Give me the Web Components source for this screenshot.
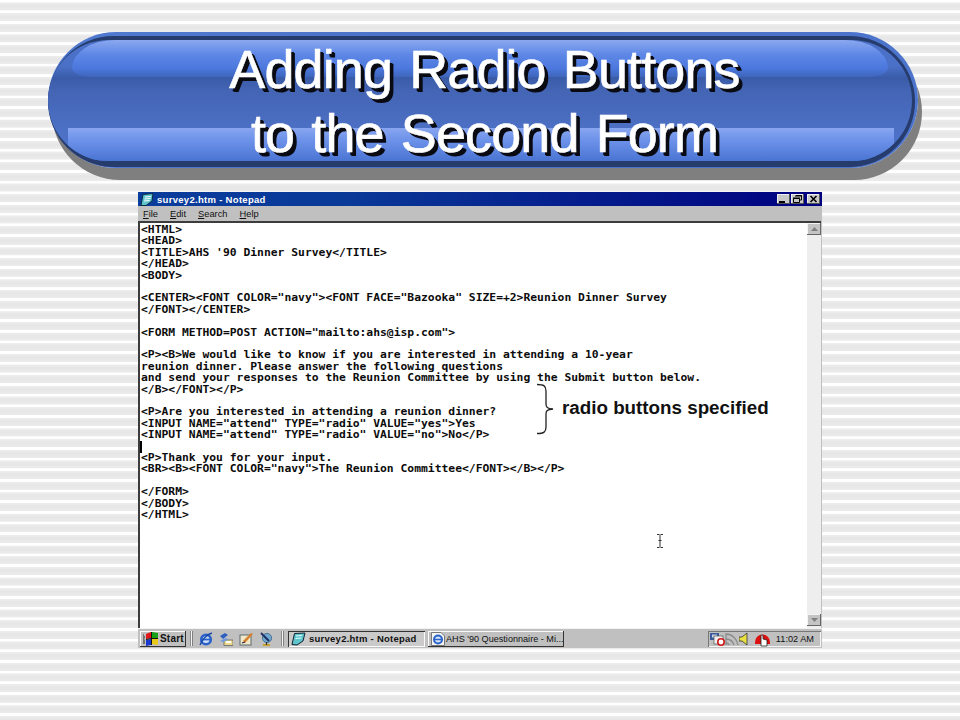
<!DOCTYPE html>
<html>
<head>
<meta charset="utf-8">
<title>Adding Radio Buttons</title>
<style>
html, body { margin: 0; height: 720px; overflow: hidden; }
body {
    background: repeating-linear-gradient(to bottom,
        #fff 0, #fff 2.2px, #ededed 2.7px, #e6e6e6 6px, #ebebeb 10.2px, #fff 10.65px);
    font-family: "Liberation Sans", Arial, sans-serif;
}
</style>
</head>
<body>
<slide-page>
    <slide-title>Adding Radio Buttons<br>to the Second Form</slide-title>
    <notepad-window title-text="survey2.htm - Notepad">
        <brace-note slot="overlay">radio buttons specified</brace-note>
    </notepad-window>
    <win-taskbar></win-taskbar>
</slide-page>

<script>
// Page wrapper, only the margins of the slide
class SlidePage extends HTMLElement {
    constructor() {
        super();
        this.attachShadow({ mode: 'open' }).innerHTML = `
            <style>
                :host { display: flex; flex-direction: column; height: 720px; box-sizing: border-box; padding-top: 32px; }
            </style>
            <slot></slot>`;
    }
}

// The glossy blue pill with the slide title
class SlideTitle extends HTMLElement {
    constructor() {
        super();
        this.attachShadow({ mode: 'open' }).innerHTML = `
            <style>
                :host {
                    display: block;
                    box-sizing: border-box;
                    width: 870px;
                    height: 136px;
                    margin: 0 0 24px 48px;
                    border-radius: 68px;
                    background: linear-gradient(to right, #5079d0, #4a72c8 50%, #4c74cc);
                    box-shadow: 4px 12px 0 #7f7f7f;
                    padding: 4px 3px 0 0;
                }
                .dark {
                    height: 131px;
                    box-sizing: border-box;
                    border-radius: 66px;
                    background: #263c6c;
                    padding: 4px 3px 6px 0;
                }
                .face {
                    position: relative;
                    height: 121px;
                    border-radius: 62px;
                    overflow: hidden;
                    background: linear-gradient(to bottom,
                        #4a70c8 0, #4a70c8 26px, #3a5ca8 38px, #4464b4 50px, #4c70c4 88px, #4c74d0 121px);
                }
                .hi-top {
                    position: absolute;
                    left: 24px; right: 24px; top: 0; height: 37px;
                    border-radius: 56px 56px 26px 26px / 36px 36px 12px 12px;
                    background: linear-gradient(to bottom, #8ba8f0 0, #5f88e6 14px, #4c78de 28px, #3f66bc 37px);
                }
                .hi-bottom {
                    position: absolute;
                    left: 20px; right: 18px; top: 88px; bottom: 0;
                    background: linear-gradient(to bottom, #89a6f0 0, #6d92ea 12px, #4c76d4 32px);
                }
                .text {
                    position: absolute;
                    inset: 0;
                    display: flex;
                    align-items: center;
                    justify-content: center;
                    text-align: center;
                    color: #fff;
                    font: 54px/64px "Liberation Sans", Arial, sans-serif;
                    letter-spacing: -0.9px;
                    word-spacing: 3px;
                    -webkit-text-stroke: 0.6px #fff;
                    text-shadow: 3px 3px 0 #0a0a12, 4px 4px 0 #0a0a12;
                    padding-left: 9px;
                }
            </style>
            <div class="dark"><div class="face">
                <div class="hi-top"></div>
                <div class="hi-bottom"></div>
                <div class="text"><div><slot></slot></div></div>
            </div></div>`;
    }
}

// Paragraphs of the edit area, a blank line between each
const NOTEPAD_BLOCKS = [
`<HTML>
<HEAD>
<TITLE>AHS '90 Dinner Survey</TITLE>
</HEAD>
<BODY>`,
`<CENTER><FONT COLOR="navy"><FONT FACE="Bazooka" SIZE=+2>Reunion Dinner Survey
</FONT></CENTER>`,
`<FORM METHOD=POST ACTION="mailto:ahs@isp.com">`,
`<P><B>We would like to know if you are interested in attending a 10-year
reunion dinner. Please answer the following questions
and send your responses to the Reunion Committee by using the Submit button below.
</B></FONT></P>`,
`<P>Are you interested in attending a reunion dinner?
<INPUT NAME="attend" TYPE="radio" VALUE="yes">Yes
<INPUT NAME="attend" TYPE="radio" VALUE="no">No</P>`,
`<P>Thank you for your input.
<BR><B><FONT COLOR="navy">The Reunion Committee</FONT></B></P>`,
`</FORM>
</BODY>
</HTML>`
];

const NOTEPAD_ICON = `<svg width="14" height="13" viewBox="0 0 14 13">
    <path d="M3 1.5 L13 .5 L12 8 L6 12.5 L1 12.5 Z" fill="#5fc4cc" stroke="#0a2a40" stroke-width="1"/>
    <path d="M5 4 L11 3.5 M4.5 6 L10.5 5.5 M4 8 L9.5 7.5" stroke="#fff" stroke-width="1"/>
</svg>`;

// Notepad window: title bar, menu bar, edit area and scrollbar
class NotepadWindow extends HTMLElement {
    constructor() {
        super();
        this.attachShadow({ mode: 'open' }).innerHTML = `
            <style>
                :host {
                    display: flex;
                    flex-direction: column;
                    position: relative;
                    box-sizing: border-box;
                    width: 684px;
                    height: 436px;
                    margin-left: 138px;
                    background: #c0c0c0;
                    font-family: "Liberation Sans", Arial, sans-serif;
                }
                .caption {
                    display: flex;
                    align-items: center;
                    gap: 3px;
                    height: 14px;
                    padding: 0 2px 0 2px;
                    background: linear-gradient(to right, #0a3c9c 0, #0a3a98 30%, #000080 100%);
                    color: #fff;
                    font-size: 9.5px;
                    font-weight: bold;
                    letter-spacing: 0.3px;
                }
                .caption .name { flex: 1; }
                .buttons { display: flex; align-items: center; }
                .buttons button {
                    all: unset;
                    display: flex;
                    width: 13px;
                    height: 10px;
                    background: #c8c8c8;
                    box-shadow: inset -1px -1px 0 #555, inset 1px 1px 0 #eee;
                }
                .buttons button + button { margin-left: 1px; }
                .buttons button:last-child { margin-left: 3px; }
                .menu {
                    display: flex;
                    align-items: center;
                    gap: 12px;
                    height: 15px;
                    padding-left: 5px;
                    font-size: 9.3px;
                    color: #111;
                }
                .menu u { text-decoration: underline; }
                .body {
                    flex: 1;
                    display: flex;
                    min-height: 0;
                    background: #fff;
                    border-left: 2px solid #3c3c3c;
                    border-top: 2px solid #3c3c3c;
                    margin-right: 1px;
                }
                .edit {
                    flex: 1;
                    min-width: 0;
                    padding: 1px 0 0 1px;
                    font: bold 11.35px/11.4px "DejaVu Sans Mono", "Liberation Mono", monospace;
                    color: #0c0c0c;
                    position: relative;
                }
                .block { white-space: pre; width: max-content; margin-bottom: 11.4px; }
                .caret {
                    position: absolute;
                    left: 0; top: 218px;
                    width: 2px; height: 12px;
                    background: #000;
                }
                .scroll {
                    width: 14px;
                    display: flex;
                    flex-direction: column;
                    justify-content: space-between;
                    background: #eeeeee;
                    padding-bottom: 2px;
                }
                .arrow {
                    height: 12px;
                    background: #c4c4c4;
                    box-shadow: inset -1px -1px 0 #666, inset 1px 1px 0 #f4f4f4;
                    display: flex;
                    align-items: center;
                    justify-content: center;
                }
            </style>
            <div class="caption">
                ${NOTEPAD_ICON}
                <span class="name"></span>
                <div class="buttons">
                    <button><svg width="13" height="10"><rect x="2" y="7" width="6" height="2" fill="#000"/></svg></button>
                    <button><svg width="13" height="10" fill="none" stroke="#000"><path d="M5 1.5h5.5v4.5h-2"/><path d="M2.5 4.5h6v4h-6z"/><path d="M4 2h7M2 4h7" stroke-width="1"/></svg></button>
                    <button><svg width="13" height="10" stroke="#000" stroke-width="1.6"><path d="M3.5 2l6 6M9.5 2l-6 6"/></svg></button>
                </div>
            </div>
            <div class="menu">
                <span><u>F</u>ile</span><span><u>E</u>dit</span><span><u>S</u>earch</span><span><u>H</u>elp</span>
            </div>
            <div class="body">
                <div class="edit"><span class="caret"></span></div>
                <div class="scroll">
                    <div class="arrow"><svg width="7" height="4"><path d="M3.5 0L7 4H0z" fill="#808080"/></svg></div>
                    <div class="arrow"><svg width="7" height="4"><path d="M0 0H7L3.5 4z" fill="#808080"/></svg></div>
                </div>
            </div>
            <slot name="overlay"></slot>`;
    }

    connectedCallback() {
        this.shadowRoot.querySelector('.name').textContent = this.getAttribute('title-text');
        const edit = this.shadowRoot.querySelector('.edit');
        NOTEPAD_BLOCKS.forEach(text => {
            const block = document.createElement('div');
            block.className = 'block';
            block.textContent = text;
            edit.appendChild(block);
        });
    }
}

// Curly brace with its note, and the mouse pointer, lying over the edit area
class BraceNote extends HTMLElement {
    constructor() {
        super();
        this.attachShadow({ mode: 'open' }).innerHTML = `
            <style>
                :host { display: block; position: absolute; inset: 0; pointer-events: none; }
                .brace { position: absolute; left: 397px; top: 191px; }
                .note {
                    position: absolute;
                    left: 424px; top: 206px;
                    font: bold 18.8px/20px "Liberation Sans", Arial, sans-serif;
                    color: #111;
                    white-space: nowrap;
                }
                .beam { position: absolute; left: 519px; top: 342px; }
            </style>
            <svg class="brace" width="24" height="52" viewBox="0 0 24 52" fill="none" stroke="#222" stroke-width="1.3">
                <path d="M2 1.5 C9 1.5 11 3 11 8 L11 21 C11 24 12 25.5 18 26 C12 26.5 11 28 11 31 L11 44 C11 49 9 50.5 2 50.5"/>
            </svg>
            <div class="note"><slot></slot></div>
            <svg class="beam" width="6" height="14" viewBox="0 0 6 14" fill="none" stroke="#333" stroke-width="1">
                <path d="M0 .5h2.5M3.5 .5H6M3 1v12M0 13.5h2.5M3.5 13.5H6M1.5 6.5h3"/>
            </svg>`;
    }
}

// Windows 98 taskbar
class WinTaskbar extends HTMLElement {
    constructor() {
        super();
        this.attachShadow({ mode: 'open' }).innerHTML = `
            <style>
                :host {
                    display: flex;
                    align-items: center;
                    box-sizing: border-box;
                    width: 684px;
                    height: 20px;
                    margin-left: 138px;
                    padding: 0 1px 0 2px;
                    background: #c0c0c0;
                    border-top: 1px solid #f2f2f2;
                    font-family: "Liberation Sans", Arial, sans-serif;
                    font-size: 10px;
                    color: #111;
                }
                .btn {
                    display: flex;
                    align-items: center;
                    box-sizing: border-box;
                    height: 16px;
                    box-shadow: inset -1px -1px 0 #333, inset 1px 1px 0 #fafafa;
                    white-space: nowrap;
                    overflow: hidden;
                }
                .start { width: 46px; padding-left: 3px; gap: 1px; font-weight: bold; font-size: 10px; letter-spacing: 0.2px; }
                .sep {
                    width: 1px; height: 15px; margin: 0 0 0 4px;
                    background: #f6f6f6; border-right: 1px solid #808080; border-left: 1px solid #8a8a8a;
                }
                .quick { display: flex; gap: 6px; margin: 0 8px 0 6px; }
                .active {
                    width: 137px; margin-left: 4px; padding-left: 3px; gap: 3px;
                    font-weight: bold; font-size: 9.5px; letter-spacing: 0.25px;
                    background: #cacaca;
                    box-shadow: inset 1px 1px 0 #333, inset -1px -1px 0 #fafafa;
                }
                .task { width: 136px; margin-left: 3px; padding-left: 3px; gap: 1px; font-size: 9.1px; }
                .tray {
                    margin-left: auto;
                    display: flex;
                    align-items: center;
                    box-sizing: border-box;
                    width: 113px;
                    height: 16px;
                    padding-left: 2px;
                    gap: 0;
                    white-space: nowrap;
                    box-shadow: inset 1px 1px 0 #777, inset -1px -1px 0 #f4f4f4;
                }
                .clock { margin-left: auto; padding-right: 7px; font-size: 9.2px; }
                svg { flex: none; display: block; }
            </style>
            <div class="btn start">
                <svg width="16" height="14" viewBox="0 0 16 14">
                    <path d="M0 3h1M0 5h2M0 7h1.5M0 9h2M0 11h2" stroke="#222" stroke-width="1"/>
                    <path d="M3 2l5-2 0 6-5 1z" fill="#e01818"/><path d="M9 0l6 1v5l-6 0z" fill="#18a018"/>
                    <path d="M3 8l5-1v6l-5 1z" fill="#1838d0"/><path d="M9 7l6 0v6l-6-1z" fill="#e8c818"/>
                    <path d="M3 7.5l5-1 1 0 6 0M8.5 0v13" stroke="#111" stroke-width="1" fill="none"/>
                </svg>
                <span>Start</span>
            </div>
            <div class="sep"></div>
            <div class="quick">
                <svg width="14" height="14" viewBox="0 0 14 14">
                    <circle cx="7" cy="7.5" r="4.8" fill="#cfe0f8" stroke="#2a62c8" stroke-width="2.6"/>
                    <path d="M3 7.5h8" stroke="#2a62c8" stroke-width="1.8"/>
                    <path d="M1 13C3 8 8 2 13 1" stroke="#1c4aa8" fill="none" stroke-width="1.3"/>
                </svg>
                <svg width="14" height="14" viewBox="0 0 14 14">
                    <rect x="5" y="8" width="9" height="5.5" fill="#ecd98c" stroke="#555" stroke-width=".7"/>
                    <path d="M7 9h5v2H7z" fill="#fff"/>
                    <path d="M1 4l5-3 3 2-5 4z" fill="#2f60c0"/><path d="M1 9l6-3 2 2-5 2z" fill="#6f9ae0"/>
                </svg>
                <svg width="14" height="14" viewBox="0 0 14 14">
                    <rect x="1" y="3" width="11" height="10" fill="#f0e8c8" stroke="#5a6a70" stroke-width="1"/>
                    <path d="M4 9l8-8 2 1-8 9z" fill="#d88030"/><path d="M3 11l3-1" stroke="#224" stroke-width="1.2"/>
                </svg>
                <svg width="14" height="14" viewBox="0 0 14 14">
                    <circle cx="8" cy="6" r="4.6" fill="#6ea8d0" stroke="#2a5a80" stroke-width=".7"/>
                    <path d="M2 1l8 8" stroke="#1c2a60" stroke-width="1.8"/>
                    <path d="M4 13h7" stroke="#c8a030" stroke-width="2"/><path d="M7.5 10v3" stroke="#333" stroke-width="1.2"/>
                </svg>
            </div>
            <div class="sep" style="margin-left:0"></div>
            <div class="btn active">
                <svg width="15" height="14" viewBox="0 0 15 14">
                    <path d="M3.5 1.5L14 1 12 9 6 13 1 12.5z" fill="#5fc4cc" stroke="#123" stroke-width="1"/>
                    <path d="M5 4l6-.5M4.5 6.5l6-.5" stroke="#dff" stroke-width="1"/>
                </svg>
                <span>survey2.htm - Notepad</span>
            </div>
            <div class="btn task">
                <svg width="14" height="14" viewBox="0 0 14 14">
                    <path d="M.5 .5H10L13.5 4V13.5H.5z" fill="#f4f4f4" stroke="#777"/>
                    <circle cx="7" cy="7.5" r="4" fill="#cfe0f8" stroke="#2a62c8" stroke-width="2"/>
                    <path d="M3.5 7.5h7" stroke="#2a62c8" stroke-width="1.4"/>
                </svg>
                <span>AHS '90 Questionnaire - Mi...</span>
            </div>
            <div class="tray">
                <svg width="15" height="14" viewBox="0 0 15 14">
                    <rect x="0" y="1" width="9" height="7" fill="#3a5a9c"/><rect x="2" y="2.5" width="5" height="3" fill="#c8d4e8"/>
                    <rect x="4" y="4" width="9" height="8" fill="#efefef" stroke="#555" stroke-width=".7"/>
                    <circle cx="11" cy="10" r="3.2" fill="#fff" stroke="#d01818" stroke-width="1.6"/>
                </svg>
                <svg width="14" height="14" viewBox="0 0 14 14" fill="none" stroke="#8a8a8a" stroke-width="1.3">
                    <path d="M1 13V2c6 0 11 5 12 11M1 7c4 0 7 3 8 6M1 11c1.500 0 3 1 3 2"/>
                </svg>
                <svg width="10" height="14" viewBox="0 0 10 14">
                    <path d="M0 5h3L8 1v12L3 9H0z" fill="#e8e040" stroke="#333" stroke-width=".8"/>
                </svg>
                <svg width="17" height="16" viewBox="0 0 17 16" style="margin-left:5px">
                    <path d="M1 11a7.500 7.500 0 1 1 15 0v2H1z" fill="#dc1010"/>
                    <path d="M7 15V5a1 1 0 0 1 2 0v3l4 1v6z" fill="#fff" stroke="#222" stroke-width=".8"/>
                </svg>
                <span class="clock">11:02 AM</span>
            </div>`;
    }
}

customElements.define('slide-page', SlidePage);
customElements.define('slide-title', SlideTitle);
customElements.define('notepad-window', NotepadWindow);
customElements.define('brace-note', BraceNote);
customElements.define('win-taskbar', WinTaskbar);
</script>
</body>
</html>
